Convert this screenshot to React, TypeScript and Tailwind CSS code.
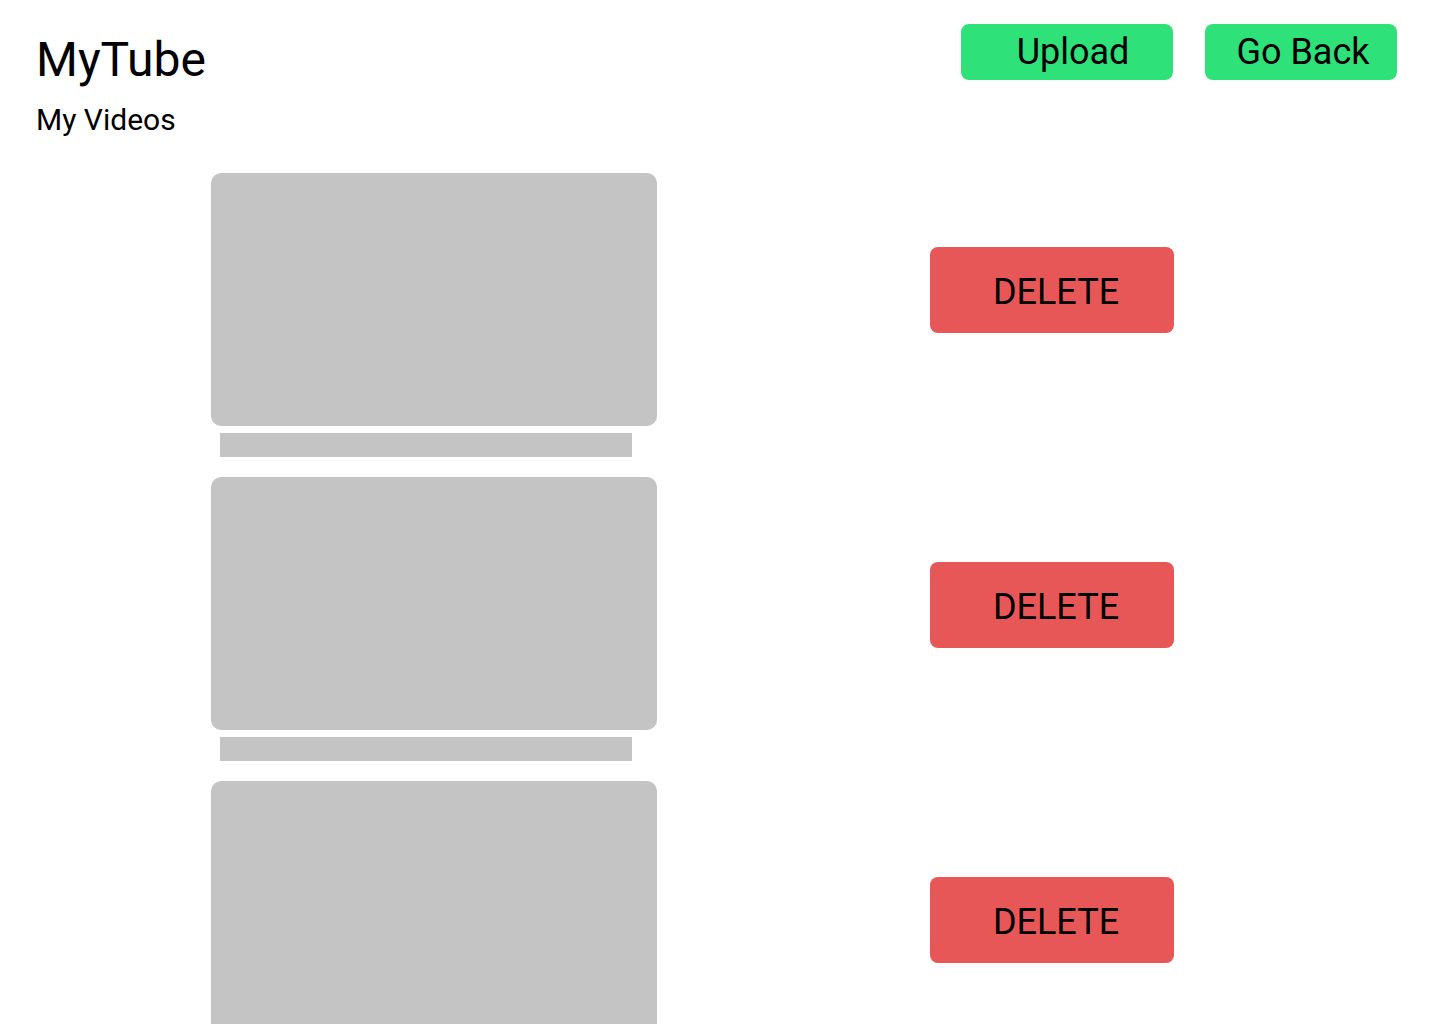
const videos = [1, 2, 3];

function VideoCard() {
  return (
    <div className="flex flex-col mb-[20px]">
      <div className="h-[253px] w-[446px] rounded-[10px] bg-[#c4c4c4]" />
      <div className="mt-[7px] ml-[9px] h-[24px] w-[412px] bg-[#c4c4c4]" />
    </div>
  );
}

export default function App() {
  return (
    <div className="min-h-screen bg-white text-black font-['Roboto',sans-serif]">
      {/* header */}
      <header className="flex justify-between pl-[36px] pr-[43px]">
        <div className="pt-[32px]">
          <h1 className="text-[48px] leading-[56px] font-normal">MyTube</h1>
          <p className="mt-[14px] text-[30px] leading-[35px]">My Videos</p>
        </div>
        <div className="flex gap-[32px] pt-[24px]">
          <button className="h-[56px] w-[212px] rounded-[8px] bg-[#2ee178] pl-[12px] text-[36px] leading-none">
            Upload
          </button>
          <button className="h-[56px] w-[192px] rounded-[8px] bg-[#2ee178] pl-[4px] text-[36px] leading-none">
            Go Back
          </button>
        </div>
      </header>

      <main className="mt-[36px] flex pl-[211px]">
        <div className="flex flex-col">
          {videos.map((v) => (
            <VideoCard key={v} />
          ))}
        </div>
        <div className="ml-[273px] flex flex-col gap-[229px] pt-[74px]">
          {videos.map((v) => (
            <button
              key={v}
              className="h-[86px] w-[244px] rounded-[8px] bg-[#e85757] pl-[8px] pt-[4px] text-[36px] leading-none"
            >
              DELETE
            </button>
          ))}
        </div>
      </main>
    </div>
  );
}
